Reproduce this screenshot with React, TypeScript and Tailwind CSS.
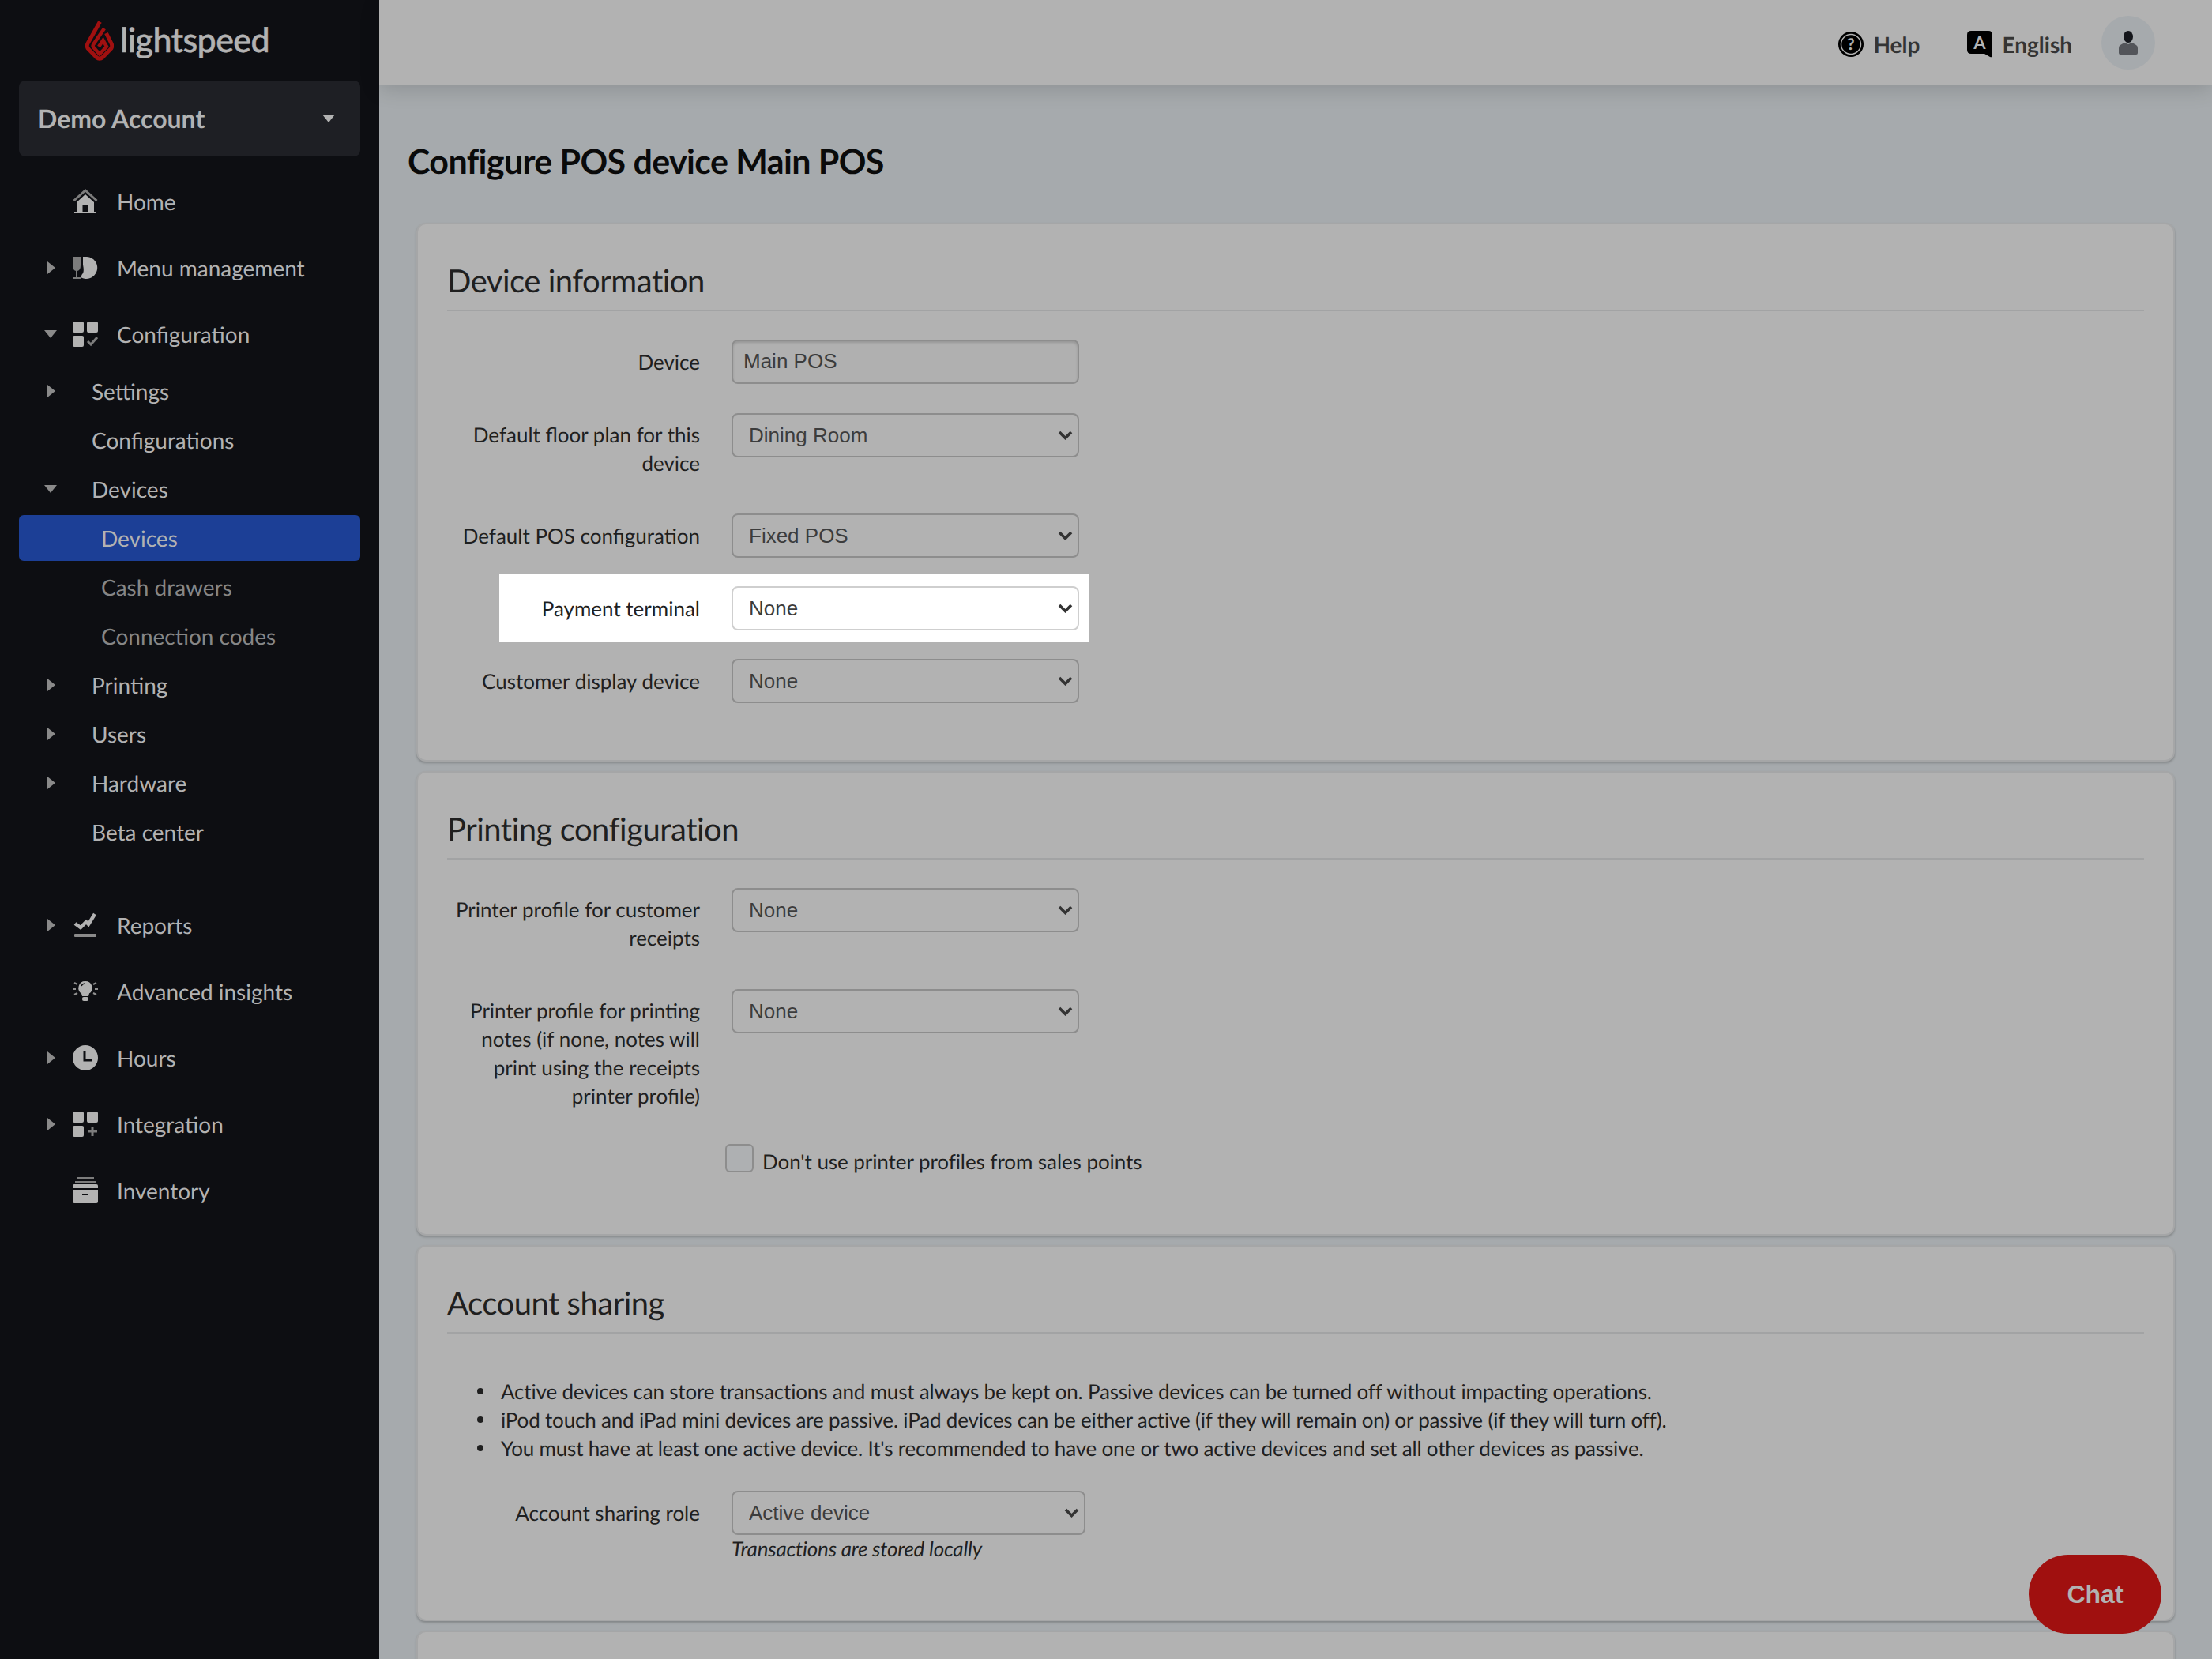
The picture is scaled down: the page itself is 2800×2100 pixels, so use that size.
import React from "react";

const L = "#b2b2b2";
const D = "#7c7c7c";

function ArrowRight() {
  return <svg width="10" height="16" viewBox="0 0 10 16"><path d="M0 0 L10 8 L0 16 Z" fill="#8a8a8a" /></svg>;
}
function ArrowDown() {
  return <svg width="16" height="10" viewBox="0 0 16 10"><path d="M0 0 H16 L8 10 Z" fill="#8a8a8a" /></svg>;
}

function HomeIcon() {
  return (
    <svg width="32" height="32" viewBox="0 0 32 32">
      <path d="M1.5 15 L16 2 L30.5 15" fill="none" stroke={D} strokeWidth="3" />
      <path d="M16 7 L27 17 V29 H19.5 V20 H12.5 V29 H5 V17 Z" fill={L} />
      <rect x="2" y="29" width="28" height="2" fill={L} />
    </svg>
  );
}
function MenuIcon() {
  return (
    <svg width="32" height="32" viewBox="0 0 32 32">
      <path d="M0 2 H10 V13 Q10 19 6 20 V28 H10 V30 H0 V28 H4 V20 Q0 19 0 13 Z" fill={D} />
      <path d="M13 2 H18 A14 14 0 1 1 10 28 L12 24 Q15 22 13 12 Z" fill={L} />
    </svg>
  );
}
function GridIcon({ plus }: { plus?: boolean }) {
  return (
    <svg width="32" height="32" viewBox="0 0 32 32">
      <rect x="0" y="0" width="14" height="14" rx="2" fill={L} />
      <rect x="18" y="0" width="14" height="14" rx="2" fill={L} />
      <rect x="0" y="18" width="14" height="14" rx="2" fill={L} />
      {plus ? (
        <path d="M25 19 V31 M19 25 H31" stroke={D} strokeWidth="3" fill="none" />
      ) : (
        <path d="M19 25 L23 29 L31 20" stroke={D} strokeWidth="3" fill="none" />
      )}
    </svg>
  );
}
function ReportsIcon() {
  return (
    <svg width="32" height="32" viewBox="0 0 32 32">
      <path d="M3 14 L10 19 L17 12 L20 15 L28 2" fill="none" stroke={L} strokeWidth="4.5" />
      <rect x="2" y="27" width="28" height="4" rx="1" fill="#8a8a8a" />
    </svg>
  );
}
function BulbIcon() {
  return (
    <svg width="32" height="28" viewBox="0 0 32 28">
      <path d="M16 1 A8.5 8.5 0 0 1 21 16.5 L20 20 H12 L11 16.5 A8.5 8.5 0 0 1 16 1 Z" fill={L} />
      <rect x="12" y="21" width="8" height="5" rx="2" fill={L} />
      <path d="M11 7 A5 5 0 0 1 15 4" stroke="#0d0e12" strokeWidth="1.5" fill="none" />
      <path d="M2 3 L6 5 M0 11 H4 M2 18 L6 16 M30 3 L26 5 M32 11 H28 M30 18 L26 16" stroke="#8f8f8f" strokeWidth="2" fill="none" />
    </svg>
  );
}
function ClockIcon() {
  return (
    <svg width="32" height="32" viewBox="0 0 32 32">
      <circle cx="16" cy="16" r="16" fill={L} />
      <path d="M15 7 V19 H24" fill="none" stroke="#0d0e12" strokeWidth="3" />
    </svg>
  );
}
function InventoryIcon() {
  return (
    <svg width="32" height="34" viewBox="0 0 32 34">
      <rect x="5" y="0" width="22" height="2" fill={D} />
      <rect x="3" y="5" width="26" height="2.5" fill={D} />
      <path d="M2 9 H30 Q32 9 32 11 V14 H0 V11 Q0 9 2 9 Z" fill={L} />
      <path d="M0 16 H32 V31 Q32 33 30 33 H2 Q0 33 0 31 Z" fill={L} />
      <rect x="12" y="21" width="8" height="2" fill="#0d0e12" />
    </svg>
  );
}

function TopItem({ arrow, icon, label, mt }: { arrow?: "right" | "down"; icon: React.ReactNode; label: string; mt?: string }) {
  return (
    <div className={`flex h-[84px] items-center ${mt ?? ""}`}>
      <div className="flex w-[92px] shrink-0 items-center justify-end pr-[22px]">
        {arrow === "right" && <ArrowRight />}
        {arrow === "down" && <div className="mr-[-2px]"><ArrowDown /></div>}
      </div>
      <div className="flex w-[32px] shrink-0 justify-center">{icon}</div>
      <span className="ml-[24px] text-[28px] leading-[36px] text-[#b2b2b2]">{label}</span>
    </div>
  );
}

function SubItem({ arrow, label }: { arrow?: "right" | "down"; label: string }) {
  return (
    <div className="flex h-[62px] items-center">
      <div className="flex w-[116px] shrink-0 items-center pl-[56px]">
        {arrow === "right" && <div className="ml-[4px]"><ArrowRight /></div>}
        {arrow === "down" && <ArrowDown />}
      </div>
      <span className="text-[28px] leading-[36px] text-[#b2b2b2]">{label}</span>
    </div>
  );
}

function LeafItem({ label, active }: { label: string; active?: boolean }) {
  return (
    <div className={active ? "mx-[24px] my-[2px] flex h-[58px] items-center rounded-[6px] bg-[#1c3f96] pl-[104px]" : "mx-[24px] flex h-[62px] items-center pl-[104px]"}>
      <span className={active ? "text-[28px] leading-[36px] text-[#b2b2b2]" : "text-[28px] leading-[36px] text-[#868686]"}>{label}</span>
    </div>
  );
}

function Sidebar() {
  return (
    <aside className="flex w-[480px] shrink-0 flex-col bg-[#0d0e12]">
      <div className="flex h-[102px] items-center pl-[108px]">
        <svg width="36" height="52" viewBox="0 0 36 52">
          <path d="M18.5 2.5 L3 30 Q1.5 33 3 36 L14 47.5 Q18 51 22 47.5 L33 36 Q34.5 33 33 30 L26.5 17" fill="none" stroke="#a01010" strokeWidth="5" />
          <path d="M24 11 L10 31.5 Q9 33.5 10.5 35 L18 43.5 L27 34 L22.5 26 L17 34" fill="none" stroke="#a01010" strokeWidth="4.5" />
        </svg>
        <span className="ml-[8px] text-[43px] font-medium leading-[54px] tracking-[-0.6px] text-[#b2b2b2] [-webkit-text-stroke:0.5px_#b2b2b2]">lightspeed</span>
      </div>
      <div className="mx-[24px] flex h-[96px] items-center justify-between rounded-[8px] bg-[#1e1f24] pl-[24px] pr-[32px]">
        <span className="text-[32px] font-bold leading-[40px] text-[#b2b2b2]">Demo Account</span>
        <svg width="16" height="10" viewBox="0 0 16 10"><path d="M0 0 H16 L8 10 Z" fill={L} /></svg>
      </div>
      <div className="mt-[15px]">
        <TopItem icon={<HomeIcon />} label="Home" />
        <TopItem arrow="right" icon={<MenuIcon />} label="Menu management" />
        <TopItem arrow="down" icon={<GridIcon />} label="Configuration" />
      </div>
      <div className="-mt-px">
        <SubItem arrow="right" label="Settings" />
        <SubItem label="Configurations" />
        <SubItem arrow="down" label="Devices" />
        <LeafItem label="Devices" active />
        <LeafItem label="Cash drawers" />
        <LeafItem label="Connection codes" />
        <SubItem arrow="right" label="Printing" />
        <SubItem arrow="right" label="Users" />
        <SubItem arrow="right" label="Hardware" />
        <SubItem label="Beta center" />
      </div>
      <TopItem mt="mt-[45px]" arrow="right" icon={<ReportsIcon />} label="Reports" />
      <TopItem icon={<BulbIcon />} label="Advanced insights" />
      <TopItem arrow="right" icon={<ClockIcon />} label="Hours" />
      <TopItem arrow="right" icon={<GridIcon plus />} label="Integration" />
      <TopItem icon={<InventoryIcon />} label="Inventory" />
    </aside>
  );
}

function Header() {
  return (
    <header className="relative z-10 flex h-[108px] shrink-0 items-center justify-end bg-[#b2b2b2] pr-[72px] shadow-[0_6px_24px_rgba(0,0,0,0.14)]">
      <svg className="mt-[4px]" width="32" height="32" viewBox="0 0 32 32">
        <circle cx="16" cy="16" r="16" fill="#000" />
        <circle cx="16" cy="16" r="12.5" fill="none" stroke="#b2b2b2" strokeWidth="1.5" />
        <text x="16" y="23" textAnchor="middle" fontSize="20" fontWeight="900" fill="#b2b2b2" fontFamily="Lato, sans-serif">?</text>
      </svg>
      <span className="ml-[12px] mt-[4px] text-[28px] font-bold leading-[36px] text-[#343434]">Help</span>
      <svg className="ml-[60px] mt-[4px]" width="32" height="34" viewBox="0 0 32 34">
        <path d="M5 0 H27 Q32 0 32 5 V32 Q32 34 29 33 L22 29 H5 Q0 29 0 24 V5 Q0 0 5 0 Z" fill="#000" />
        <text x="16" y="23" textAnchor="middle" fontSize="22" fontWeight="700" fill="#b2b2b2" fontFamily="Lato, sans-serif">A</text>
      </svg>
      <span className="ml-[12px] mt-[4px] text-[28px] font-bold leading-[36px] text-[#343434]">English</span>
      <div className="ml-[37px] flex h-[68px] w-[68px] items-center justify-center rounded-full bg-[#a6aaad]">
        <svg width="24" height="30" viewBox="0 0 24 30">
          <ellipse cx="12" cy="7.5" rx="6" ry="7.5" fill="#14161b" />
          <path d="M7 15 L12 17 L17 15 L22 18 Q24 19 24 22 V28 Q24 30 22 30 H2 Q0 30 0 28 V22 Q0 19 2 18 Z" fill="#53555a" />
        </svg>
      </div>
    </header>
  );
}

function Select({ value, wide, white }: { value: string; wide?: boolean; white?: boolean }) {
  return (
    <div className={`relative shrink-0 ${wide ? "w-[448px]" : "w-[440px]"}`}>
      <select
        defaultValue={value}
        className={`block h-[56px] w-full appearance-none rounded-[8px] border-2 pl-[20px] pr-[32px] font-['Liberation_Sans',sans-serif] text-[26px] text-[#3c3c3c] ${white ? "border-[#cfcfcf] bg-white" : "border-[#8d8d8d] bg-[#b2b2b2]"}`}
      >
        <option>{value}</option>
      </select>
      <svg className="pointer-events-none absolute right-[8px] top-[22px]" width="19" height="12" viewBox="0 0 19 12">
        <path d="M2 2 L9.5 9.5 L17 2" fill="none" stroke="#333333" strokeWidth="3.6" />
      </svg>
    </div>
  );
}

function Row({ label, mb, pt, children }: { label: React.ReactNode; mb: string; pt?: string; children: React.ReactNode }) {
  return (
    <div className={`flex items-start gap-[40px] ${mb}`}>
      <label className={`w-[320px] shrink-0 text-right text-[26px] leading-[36px] text-[#1f1f1f] ${pt ?? "pt-[10px]"}`}>{label}</label>
      {children}
    </div>
  );
}

function Card({ title, pb, children }: { title?: string; pb?: string; children?: React.ReactNode }) {
  return (
    <section className={`shrink-0 rounded-[12px] border-2 border-[#a5a6a7] bg-[#b2b2b2] px-[37px] shadow-[0_2px_3px_rgba(0,0,0,0.22)] ${pb ?? ""}`}>
      {title && (
        <h2 className="mb-[36px] flex h-[110px] items-end border-b-2 border-[#a2a3a4] pb-[12px] text-[40px] leading-[50px] tracking-[-0.5px] text-[#1f1f1f]">{title}</h2>
      )}
      {children}
    </section>
  );
}

export default function App() {
  return (
    <div className="flex h-[2100px] w-[2800px] overflow-hidden bg-[#a6aaad] font-['Lato',sans-serif] [text-rendering:geometricPrecision]">
      <Sidebar />
      <main className="flex min-w-0 flex-1 flex-col">
        <Header />
        <div className="flex flex-col overflow-hidden px-[47px]">
          <h1 className="-ml-[11px] flex h-[174px] shrink-0 items-center pt-[19px] text-[43px] font-bold leading-[54px] tracking-[-0.62px] text-[#0a0a0a]">Configure POS device Main POS</h1>
          <div className="flex flex-col gap-[12px]">
            <Card title="Device information" pb="pb-[72px]">
              <Row label="Device" mb="mb-[37px]">
                <input readOnly value="Main POS" className="h-[56px] w-[440px] shrink-0 rounded-[8px] border-2 border-[#8d8d8d] bg-[#b0b0b0] px-[13px] pb-[2px] font-['Liberation_Sans',sans-serif] text-[26px] text-[#3c3c3c] shadow-[inset_0_2px_3px_rgba(0,0,0,0.15)]" />
              </Row>
              <Row label="Default floor plan for this device" mb="mb-[46px]" pt="pt-[9px]">
                <Select value="Dining Room" />
              </Row>
              <Row label="Default POS configuration" mb="mb-[21px]">
                <Select value="Fixed POS" />
              </Row>
              <div className="mb-[21px] ml-[66px] flex w-[746px] items-start gap-[40px] bg-white py-[15px] pr-[12px]">
                <label className="w-[254px] shrink-0 pt-[10px] text-right text-[26px] leading-[36px] text-[#1f1f1f]">Payment terminal</label>
                <Select value="None" white />
              </div>
              <Row label="Customer display device" mb="mb-0">
                <Select value="None" />
              </Row>
            </Card>
            <Card title="Printing configuration" pb="pb-[74px]">
              <Row label="Printer profile for customer receipts" mb="mb-[47px]" pt="pt-[9px]">
                <Select value="None" />
              </Row>
              <Row label="Printer profile for printing notes (if none, notes will print using the receipts printer profile)" mb="mb-[43px]" pt="pt-[9px]">
                <Select value="None" />
              </Row>
              <div className="flex items-start pl-[352px]">
                <input type="checkbox" className="h-[36px] w-[36px] appearance-none rounded-[6px] border-2 border-[#8d8d8d] bg-[#aeb0b2]" />
                <span className="ml-[11px] pt-[4px] text-[26px] leading-[36px] tracking-[-0.07px] text-[#1f1f1f]">Don't use printer profiles from sales points</span>
              </div>
            </Card>
            <Card title="Account sharing" pb="pb-[72px]">
              <ul className="mb-[36px] mt-[55px] pl-[38px] text-[26px] leading-[36px] tracking-[-0.18px] text-[#1f1f1f]">
                {[
                  "Active devices can store transactions and must always be kept on. Passive devices can be turned off without impacting operations.",
                  "iPod touch and iPad mini devices are passive. iPad devices can be either active (if they will remain on) or passive (if they will turn off).",
                  "You must have at least one active device. It's recommended to have one or two active devices and set all other devices as passive.",
                ].map((t) => (
                  <li key={t} className="flex items-center gap-[22px]">
                    <span className="h-[8px] w-[8px] shrink-0 rounded-full bg-[#1f1f1f]" />
                    <span>{t}</span>
                  </li>
                ))}
              </ul>
              <Row label="Account sharing role" mb="mb-0">
                <div className="flex flex-col">
                  <Select value="Active device" wide />
                  <span className="-mt-px text-[26px] italic leading-[36px] tracking-[-0.22px] text-[#1f1f1f]">Transactions are stored locally</span>
                </div>
              </Row>
            </Card>
            <Card pb="h-[200px]" />
          </div>
        </div>
      </main>
      <button className="absolute left-[2568px] top-[1968px] h-[100px] w-[168px] rounded-full bg-[#a0100f] font-['Liberation_Sans',sans-serif] text-[32px] font-bold text-[#b2b2b2]">Chat</button>
    </div>
  );
}
